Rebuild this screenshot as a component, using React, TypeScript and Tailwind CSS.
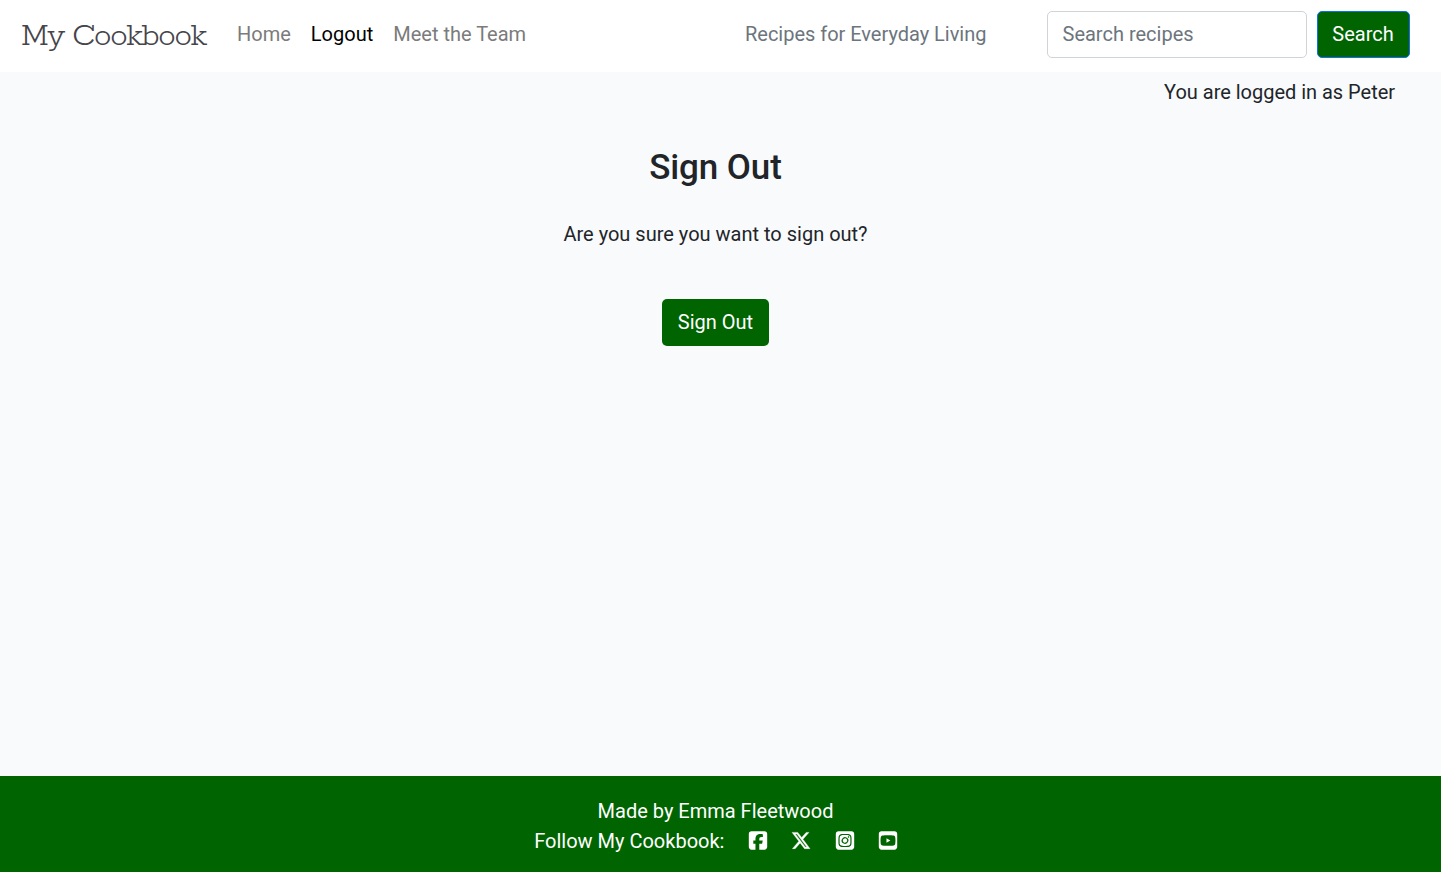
import React from "react";
import { FaSquareFacebook, FaXTwitter, FaSquareInstagram, FaSquareYoutube } from "react-icons/fa6";

export default function App() {
  return (
    <div className="flex h-[872px] flex-col bg-[#f9fafc] font-['Roboto',sans-serif] text-[20px] leading-[30px] text-[#212529]">
      <nav className="flex h-[72px] shrink-0 items-start bg-white pt-[11px] pl-[21px]">
        <a className="w-[216px] pt-[2px] font-['Rokkitt','Liberation_Serif',serif] text-[35px] leading-[46px] font-[340] tracking-[-1.25px] whitespace-nowrap text-[#45454a]">My Cookbook</a>
        <div className="flex w-[508px] gap-[20px] pt-[8px] text-[#7b7b7b]">
          <a>Home</a>
          <a className="text-black">Logout</a>
          <a>Meet the Team</a>
        </div>
        <span className="w-[302px] pt-[8px] tracking-[-0.02px] text-[#6c757d]">Recipes for Everyday Living</span>
        <input placeholder="Search recipes" className="h-[47px] w-[260px] rounded-[5px] border border-[#ced4da] pr-[15px] pb-[2px] pl-[14.5px] placeholder:text-[#6c757d]" />
        <button className="ml-[10px] h-[47px] w-[93px] rounded-[5px] border border-[#0d6efd] bg-[#006400] pr-[1px] pb-[2px] text-white">Search</button>
      </nav>
      <p className="pt-[5px] pr-[46px] text-right tracking-[-0.02px]">You are logged in as Peter</p>
      <main className="flex grow flex-col items-center pt-[40px] pr-[10px]">
        <h1 className="text-[35px] leading-[42px] font-medium tracking-[-0.1px]">Sign Out</h1>
        <p className="mt-[30px]">Are you sure you want to sign out?</p>
        <button className="mt-[50px] h-[47px] w-[107px] rounded-[5px] bg-[#006400] pb-[2px] text-white">Sign Out</button>
      </main>
      <footer className="flex h-[96px] shrink-0 flex-col items-center bg-[#006400] pt-[20px] pr-[10px] text-white">
        <p>Made by Emma Fleetwood</p>
        <div className="flex items-center">
          <span className="mr-[23.6px] ml-[1.4px]">Follow My Cookbook:</span>
          <div className="flex gap-[23.4px] pb-[1px]">
            <FaSquareFacebook className="h-[21px]" />
            <FaXTwitter className="h-[21px]" stroke="white" strokeWidth={10} />
            <FaSquareInstagram className="h-[21px]" />
            <FaSquareYoutube className="h-[21px]" />
          </div>
        </div>
      </footer>
    </div>
  );
}
